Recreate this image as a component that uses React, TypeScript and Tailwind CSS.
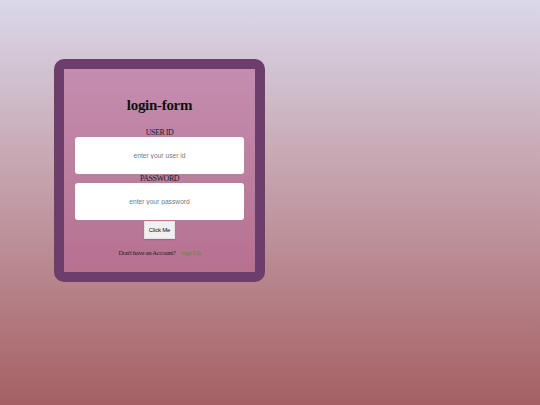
import React from "react";

export default function App() {
  return (
    <div className="min-h-screen w-full bg-gradient-to-b from-[#dad8ea] to-[#a46064] pt-[59px] pl-[54px] font-['Liberation_Serif',serif]">
      <div className="w-[211px] h-[223px] rounded-[10px] bg-[#6d3d6c] p-[10px]">
        <form
          className="flex h-full flex-col items-center bg-gradient-to-b from-[#c48db0] to-[#b6718f] px-[11px] pt-[29px]"
          onSubmit={(e) => e.preventDefault()}
        >
          <h1 className="text-[15px] font-bold leading-none tracking-[-0.3px] text-[#111]">login-form</h1>

          <label className="mt-[16px] h-[8px] text-[8px] leading-[8px] tracking-[-0.45px] text-[#1a1a1a]">USER ID</label>
          <input
            type="text"
            placeholder="enter your user id"
            className="h-[37px] w-full rounded-[3px] bg-white text-center font-['Liberation_Sans',sans-serif] text-[6.7px] placeholder:text-[#7a7a7a] outline-none"
          />

          <label className="mt-[1px] h-[8px] text-[8px] leading-[8px] tracking-[-0.45px] text-[#1a1a1a]">PASSWORD</label>
          <input
            type="password"
            placeholder="enter your password"
            className="h-[37px] w-full rounded-[3px] bg-white text-center font-['Liberation_Sans',sans-serif] text-[6.7px] placeholder:text-[#7a7a7a] outline-none"
          />

          <button
            type="submit"
            className="mt-px flex h-[18px] w-[31px] items-center justify-center border border-[#e2e2e2] bg-[#f0f0f0] font-['Liberation_Sans',sans-serif] text-[6px] tracking-[-0.2px] text-[#111] shadow-[0_1px_1px_rgba(0,0,0,0.12)]"
          >
            Click Me
          </button>

          <p className="mt-[11px] text-[6.8px] leading-none tracking-[-0.35px] text-[#222]">
            Don't have an Account?
            <a href="#" className="ml-[5px] text-[#5d8a3a]">Sign Up</a>
          </p>
        </form>
      </div>
    </div>
  );
}
